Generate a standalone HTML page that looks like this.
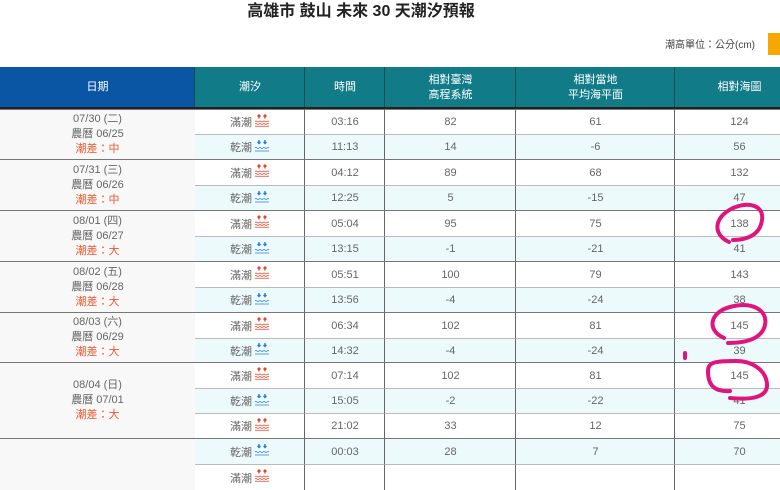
<!DOCTYPE html>
<html><head><meta charset="utf-8"><style>
*{margin:0;padding:0;box-sizing:border-box}
body{width:780px;height:471px;overflow:hidden;background:#fff;position:relative;font-family:"Liberation Sans","Noto Sans CJK TC",sans-serif}
.t{position:absolute;left:0;width:722px;top:2px;text-align:center;font-size:16px;font-weight:bold;color:#222;line-height:20px}
.unit{position:absolute;left:665px;top:36px;font-size:10px;color:#444}
.btn{position:absolute;left:768px;top:33px;width:20px;height:22px;background:#f6a800}
.h{position:absolute;top:67px;height:41px;color:#fff;font-size:11px;display:flex;align-items:center;justify-content:center;text-align:center;line-height:15px;background:#127b88;border-left:1px solid #0d4f57}
.c{position:absolute;font-size:11px;color:#666;display:flex;align-items:center;justify-content:center;border-left:1px solid #666;border-top:1px solid #bbb}
.d{position:absolute;left:0;width:195px;background:#f8f8f8;border-top:1px solid #777;font-size:11px;color:#666;text-align:center;display:flex;flex-direction:column;justify-content:center;line-height:15px}
.d .o{color:#e8582e}
.cy{background:#edfafc}
svg.i{margin-left:2px;margin-top:-4px}
</style></head><body>
<div class="t">高雄市 鼓山 未來 30 天潮汐預報</div>
<div class="unit">潮高單位：公分(cm)</div>
<div class="btn"></div>
<div class="h" style="left:0;width:195px;background:#0a56a4;border-left:none">日期</div>
<div class="h" style="left:194px;width:111px">潮汐</div>
<div class="h" style="left:304px;width:81px">時間</div>
<div class="h" style="left:384px;width:132px">相對臺灣<br>高程系統</div>
<div class="h" style="left:515px;width:160px">相對當地<br>平均海平面</div>
<div class="h" style="left:674px;width:130px">相對海圖</div>
<div style="position:absolute;left:0;top:107px;width:780px;height:2px;background:#222"></div>
<div id="g"></div>
<script>
var tops=[109,134,159,185,210,236,261,287,312,338,362,388,413,438,464,490];
var rows=[["滿","03:16","82","61","124"],["乾","11:13","14","-6","56"],["滿","04:12","89","68","132"],["乾","12:25","5","-15","47"],["滿","05:04","95","75","138"],["乾","13:15","-1","-21","41"],["滿","05:51","100","79","143"],["乾","13:56","-4","-24","38"],["滿","06:34","102","81","145"],["乾","14:32","-4","-24","39"],["滿","07:14","102","81","145"],["乾","15:05","-2","-22","41"],["滿","21:02","33","12","75"],["乾","00:03","28","7","70"],["滿","","","",""]];
var cols=[[194,111],[304,81],[384,132],[515,160],[674,130]];
var up='<svg class="i" width="16" height="13" viewBox="0 0 16 13"><path d="M5 1v3.5M3.5 2.5L5 1l1.5 1.5M11 1v3.5M9.5 2.5L11 1l1.5 1.5" stroke="#e2452a" stroke-width="1.4" fill="none"/><path d="M1 7.5q1-1 2 0t2 0 2 0 2 0 2 0 2 0 2 0M1 10q1-1 2 0t2 0 2 0 2 0 2 0 2 0 2 0M1 12.5q1-1 2 0t2 0 2 0 2 0 2 0 2 0 2 0" stroke="#e2452a" stroke-width="0.8" fill="none"/></svg>';
var dn='<svg class="i" width="16" height="13" viewBox="0 0 16 13"><path d="M5 1v3.5M3.5 3L5 4.5 6.5 3M11 1v3.5M9.5 3L11 4.5 12.5 3" stroke="#2a7fd4" stroke-width="1.4" fill="none"/><path d="M1 9q1-1 2 0t2 0 2 0 2 0 2 0 2 0 2 0M1 12h14" stroke="#2a7fd4" stroke-width="0.8" fill="none"/></svg>';
var h='';
for(var r=0;r<rows.length;r++){var t=tops[r],hh=tops[r+1]-t,R=rows[r],cy=R[0]=="乾"?" cy":"";
var gb=[0,2,4,6,8,10,13].indexOf(r)>=0?"border-top-color:#777;":"";
for(var c=0;c<5;c++){var txt=c==0?(R[0]+"潮"+(R[0]=="滿"?up:dn)):R[c];
h+='<div class="c'+cy+'" style="'+gb+'left:'+cols[c][0]+'px;width:'+cols[c][1]+'px;top:'+t+'px;height:'+hh+'px">'+txt+'</div>';}}
var ds=[[109,159,"07/30 (二)","06/25","中"],[159,210,"07/31 (三)","06/26","中"],[210,261,"08/01 (四)","06/27","大"],[261,312,"08/02 (五)","06/28","大"],[312,362,"08/03 (六)","06/29","大"],[362,438,"08/04 (日)","07/01","大"],[438,490,"","",""]];
ds.forEach(function(d){h+='<div class="d" style="top:'+d[0]+'px;height:'+(d[1]-d[0])+'px">'+(d[2]?'<div>'+d[2]+'</div><div>農曆 '+d[3]+'</div><div class="o">潮差：'+d[4]+'</div>':'')+'</div>';});
document.getElementById('g').innerHTML=h;
</script>
<svg style="position:absolute;left:0;top:0" width="780" height="471"><g stroke="#e0147e" stroke-width="4" fill="none" stroke-linecap="round">
<path d="M729 242 C712 234 714 217 733 208 C750 201 764 206 762 220 C760 236 745 240 733 240"/>
<path d="M724 338 C706 330 710 312 730 307 C752 301 768 310 765 325 C762 338 748 343 728 343"/>
<path d="M730 391 C713 392 708 384 708 371 C708 362 715 361 736 361 C752 361 766 370 767 384 C768 398 750 400 730 398"/>
<path d="M685 353 v5"/>
</g></svg>
</body></html>
